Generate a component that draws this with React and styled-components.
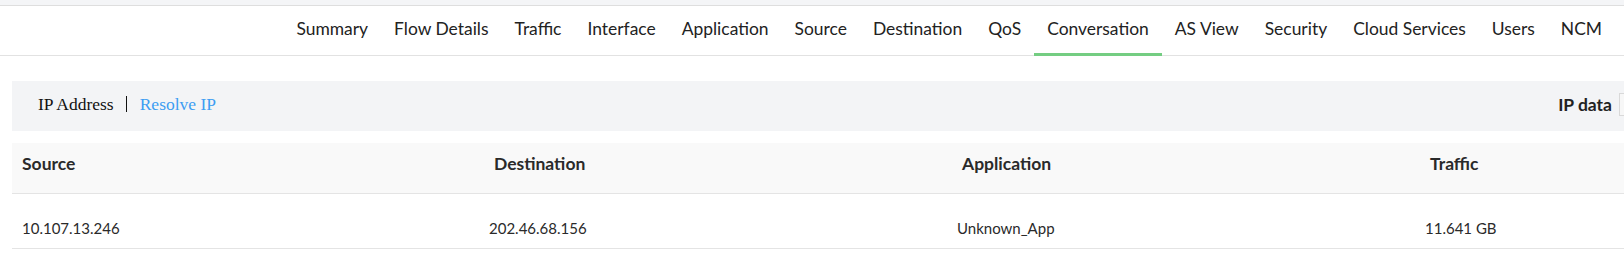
import React from "react";
import styled, { createGlobalStyle } from "styled-components";

const GlobalStyle = createGlobalStyle`
  body {
    margin: 0;
    font-family: Lato, "Noto Sans", sans-serif;
    color: #222;
    background: #fff;
    overflow: hidden;
  }
`;

const tabs = [
  "Summary",
  "Flow Details",
  "Traffic",
  "Interface",
  "Application",
  "Source",
  "Destination",
  "QoS",
  "Conversation",
  "AS View",
  "Security",
  "Cloud Services",
  "Users",
  "NCM",
];

const columns = ["Source", "Destination", "Application", "Traffic"];

const rows = [["10.107.13.246", "202.46.68.156", "Unknown_App", "11.641 GB"]];

const TopStrip = styled.div`
  height: 5px;
  background: #f4f5f7;
  border-bottom: 1px solid #dedede;
`;

const Nav = styled.nav`
  display: flex;
  justify-content: flex-end;
  height: 50px;
  padding-right: 9px;
  border-bottom: 1px solid #e2e2e2;
  box-sizing: border-box;
`;

const Tab = styled.div`
  display: flex;
  align-items: center;
  height: 50px;
  padding: 0 13px 2px;
  margin-bottom: -1px;
  box-sizing: border-box;
  border-bottom: 3px solid ${({ active }) => (active ? "#74cd82" : "transparent")};
  font-size: 17.45px;
  color: #222;
  white-space: nowrap;
  cursor: pointer;
`;

const Content = styled.div`
  padding: 25px 0 0 12px;
  overflow: hidden;
`;

const Toolbar = styled.div`
  display: flex;
  align-items: center;
  width: 1759px;
  height: 50px;
  padding: 0 12px 4px 26px;
  box-sizing: border-box;
  background: #f3f4f6;
`;

const ViewSwitch = styled.div`
  display: flex;
  align-items: center;
  font-family: "Liberation Serif", serif;
  font-size: 17.5px;
`;

const SwitchItem = styled.span`
  color: ${({ active }) => (active ? "#111" : "#3d9df2")};
  cursor: pointer;
`;

const Divider = styled.span`
  width: 1px;
  height: 16px;
  margin: 0 13px 0 12px;
  background: #111;
`;

const DataPicker = styled.div`
  display: flex;
  align-items: center;
  gap: 7px;
  margin-left: auto;
`;

const PickerLabel = styled.span`
  font-weight: 700;
  font-size: 17.5px;
  color: #222;
`;

const Select = styled.div`
  width: 140px;
  height: 23px;
  box-sizing: border-box;
  border: 1px solid #d9d9d9;
  background: #f7f7f7;
`;

const Table = styled.div`
  width: 1876px;
  margin-top: 12px;
`;

const Row = styled.div`
  display: grid;
  grid-template-columns: ${({ cols }) => cols};
  align-items: center;
  height: ${({ h }) => h}px;
  background: ${({ head }) => (head ? "#f9f9f9" : "#fff")};
  border-bottom: 1px solid #e4e4e4;
`;

const Cell = styled.div`
  padding: ${({ head }) => (head ? "0 0 9px 10px" : "14px 0 0 10px")};
  font-size: ${({ head }) => (head ? "17.5px" : "15px")};
  font-weight: ${({ head }) => (head ? 700 : 400)};
  color: #2a2a2a;
  white-space: nowrap;
`;

export default function App() {
  return (
    <>
      <GlobalStyle />
      <TopStrip />
      <Nav>
        {tabs.map((t) => (
          <Tab key={t} active={t === "Conversation"}>
            {t}
          </Tab>
        ))}
      </Nav>
      <Content>
        <Toolbar>
          <ViewSwitch>
            <SwitchItem active>IP Address</SwitchItem>
            <Divider />
            <SwitchItem>Resolve IP</SwitchItem>
          </ViewSwitch>
          <DataPicker>
            <PickerLabel>IP data</PickerLabel>
            <Select />
          </DataPicker>
        </Toolbar>
        <Table>
          <Row head cols="472px 468px 468px 468px" h={50}>
            {columns.map((c) => (
              <Cell head key={c}>
                {c}
              </Cell>
            ))}
          </Row>
          {rows.map((r, i) => (
            <Row key={i} cols="467px 468px 468px 468px" h={54}>
              {r.map((v, j) => (
                <Cell key={j}>{v}</Cell>
              ))}
            </Row>
          ))}
        </Table>
      </Content>
    </>
  );
}
